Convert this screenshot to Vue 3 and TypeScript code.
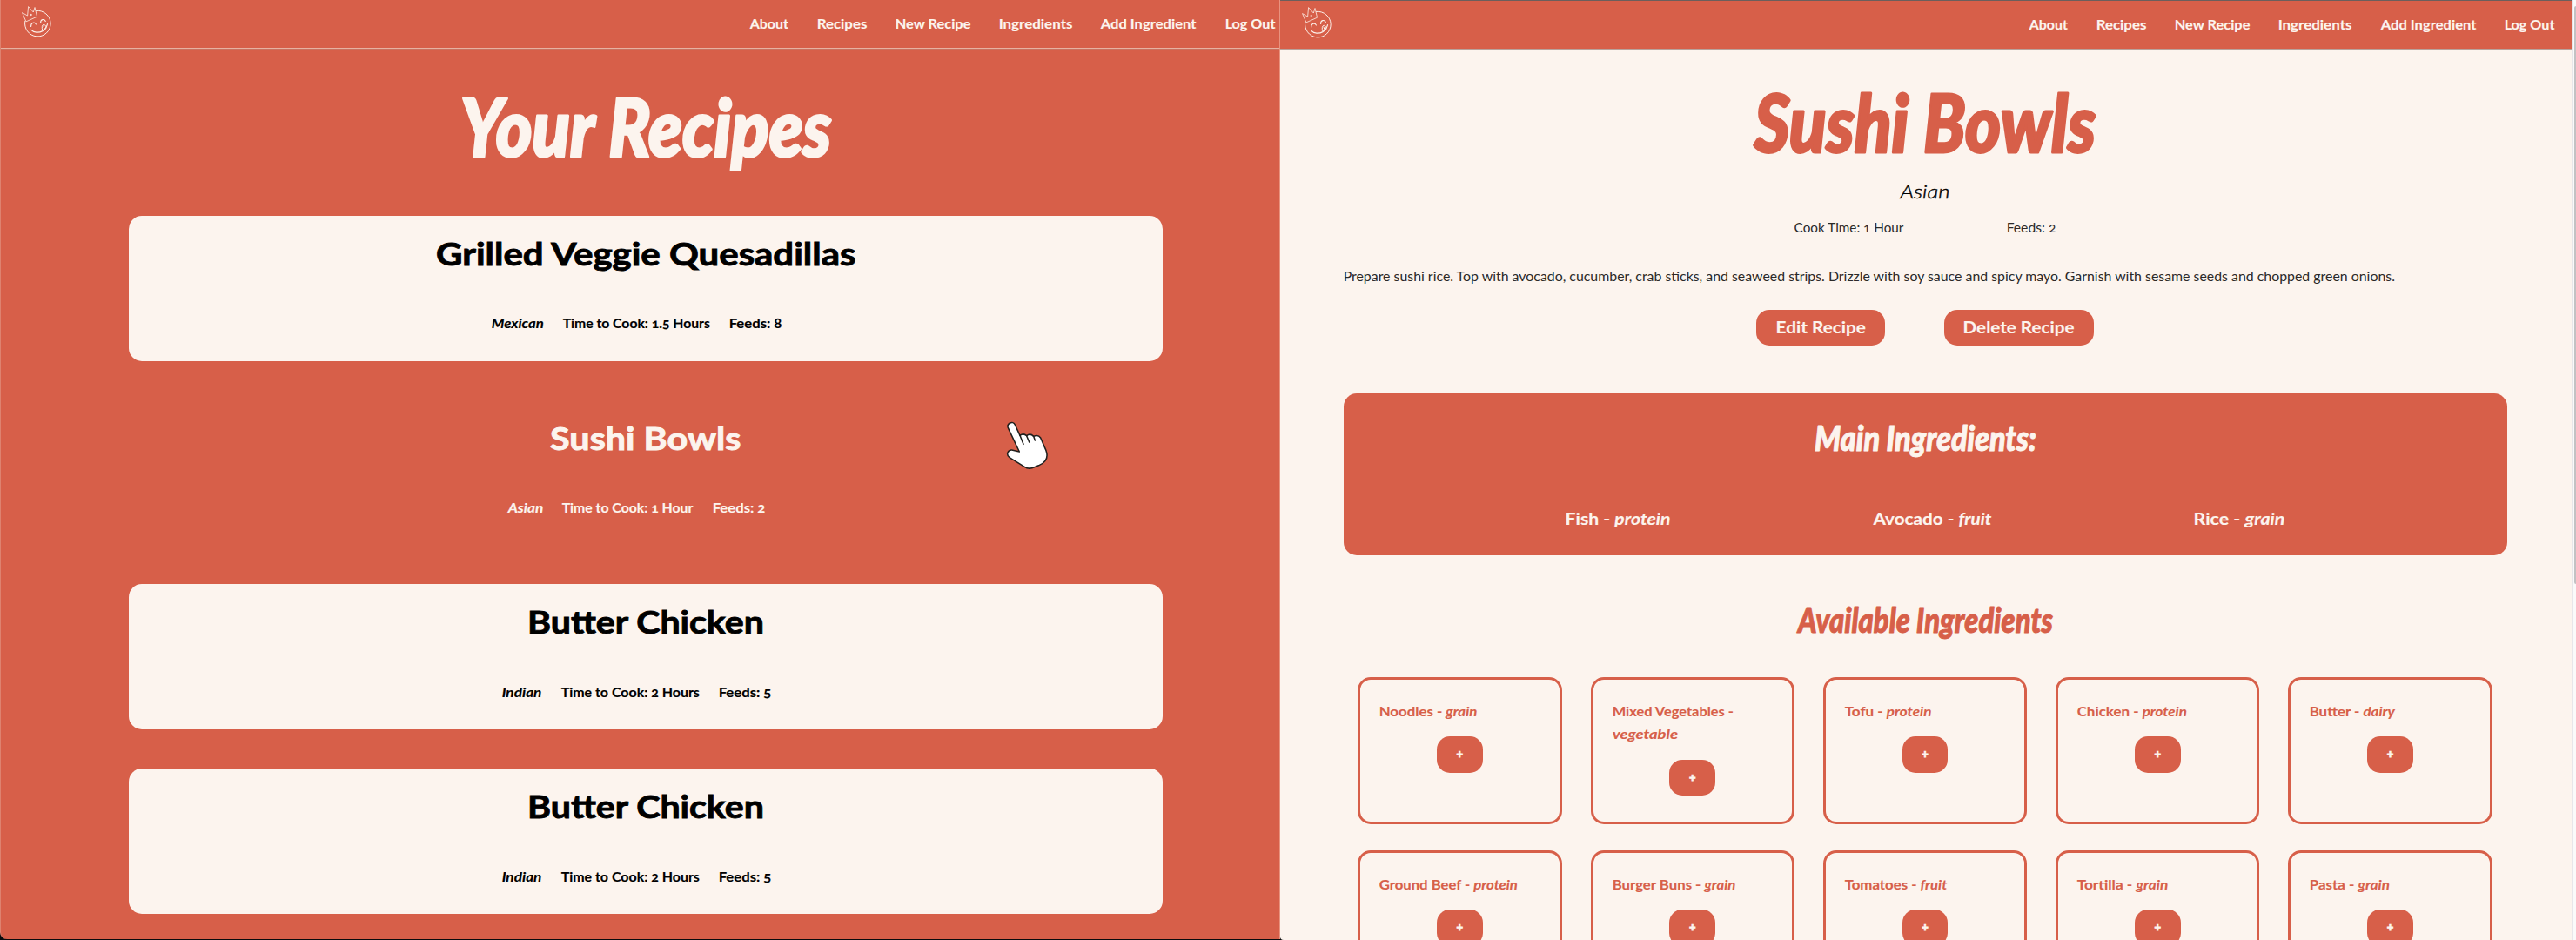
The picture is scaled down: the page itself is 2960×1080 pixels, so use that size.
<script setup lang="ts">
import { h, type FunctionalComponent } from 'vue'

type Part = string | { i: string }

// A single line of text set to a fixed width, with its baseline near 80% of the font size.
const Line: FunctionalComponent<{ parts: Part[]; size: number; w: number }> = (props) => {
  const { parts, size, w } = props
  const bearing = size * 0.025
  return h('svg', { width: w, height: size, 'font-size': size, class: 'line' }, [
    h(
      'text',
      { x: -bearing, y: size * 0.8 + 0.5, textLength: w + bearing * 2, lengthAdjust: 'spacingAndGlyphs', fill: 'currentColor' },
      parts.map((p) => (typeof p === 'string' ? p : h('tspan', { 'font-style': 'italic' }, p.i))),
    ),
  ])
}
Line.props = ['parts', 'size', 'w']

const nav: [string, number][] = [
  ['About', 43.5],
  ['Recipes', 57],
  ['New Recipe', 86],
  ['Ingredients', 84],
  ['Add Ingredient', 109],
  ['Log Out', 57],
]

const recipes = [
  { name: 'Grilled Veggie Quesadillas', w: 480.5, kind: 'Mexican', kw: 59.5, time: 'Time to Cook: 1.5 Hours', tw: 168.5, feeds: 'Feeds: 8', fw: 60, active: false },
  { name: 'Sushi Bowls', w: 217.5, kind: 'Asian', kw: 40, time: 'Time to Cook: 1 Hour', tw: 150, feeds: 'Feeds: 2', fw: 60, active: true },
  { name: 'Butter Chicken', w: 270, kind: 'Indian', kw: 45, time: 'Time to Cook: 2 Hours', tw: 158.5, feeds: 'Feeds: 5', fw: 60, active: false },
  { name: 'Butter Chicken', w: 270, kind: 'Indian', kw: 45, time: 'Time to Cook: 2 Hours', tw: 158.5, feeds: 'Feeds: 5', fw: 60, active: false },
]

const mainIngredients: { parts: Part[]; w: number }[] = [
  { parts: ['Fish - ', { i: 'protein' }], w: 120 },
  { parts: ['Avocado - ', { i: 'fruit' }], w: 135 },
  { parts: ['Rice - ', { i: 'grain' }], w: 104 },
]

const available: { parts: Part[]; w: number }[][] = [
  [{ parts: ['Noodles - ', { i: 'grain' }], w: 112 }],
  [{ parts: ['Mixed Vegetables -'], w: 138.5 }, { parts: [{ i: 'vegetable' }], w: 74.5 }],
  [{ parts: ['Tofu - ', { i: 'protein' }], w: 99 }],
  [{ parts: ['Chicken - ', { i: 'protein' }], w: 125.5 }],
  [{ parts: ['Butter - ', { i: 'dairy' }], w: 97.5 }],
  [{ parts: ['Ground Beef - ', { i: 'protein' }], w: 158.5 }],
  [{ parts: ['Burger Buns - ', { i: 'grain' }], w: 141 }],
  [{ parts: ['Tomatoes - ', { i: 'fruit' }], w: 117 }],
  [{ parts: ['Tortilla - ', { i: 'grain' }], w: 104 }],
  [{ parts: ['Pasta - ', { i: 'grain' }], w: 91.5 }],
]
</script>

<template>
  <div class="app">
    <section class="pane list-pane">
      <header class="bar">
        <svg class="logo" width="36" height="38" viewBox="25 6 36 38">
          <use href="#face" />
          <defs>
            <g id="face" fill="none" stroke="#fcf0e9" stroke-width="1" stroke-linejoin="round" stroke-linecap="round">
              <path d="M41.5 12.4A14.8 14.8 0 1 1 28.8 24.2" />
              <path d="M25.9 14.8L31.6 18L32.6 7.6L38.3 14L40 8.5L42.6 19.2L30.3 24.7Z" stroke-width=".8" />
              <circle cx="35.5" cy="17" r=".6" />
              <path d="M35.6 30.5C35.6 25.8 39.8 25 41.4 27.9M46.6 26.5C46.4 22 50.8 21.3 52.3 24.4" stroke-width="1.1" />
              <path d="M35.8 34.3C39 37.8 44.5 38 49 35.6Q53.2 32.7 54.5 27.6" stroke-width="1.2" />
              <path d="M48.9 35C46.6 29.2 50.2 26.5 52.4 29.7C54 32 52.2 34.6 49.5 35M50.1 30.3L51 33" />
            </g>
          </defs>
        </svg>
        <nav><a v-for="[label, w] in nav" :key="label"><Line :parts="[label]" :size="15.5" :w="w" /></a></nav>
      </header>
      <main class="recipes">
        <h1 class="script"><Line :parts="['Your Recipes']" :size="91" :w="422" /></h1>
        <div class="cards">
          <article v-for="(r, n) in recipes" :key="n" class="card" :class="{ active: r.active }">
            <h2><Line :parts="[r.name]" :size="36.5" :w="r.w" /></h2>
            <div class="meta">
              <Line :parts="[{ i: r.kind }]" :size="15.5" :w="r.kw" />
              <Line :parts="[r.time]" :size="15.5" :w="r.tw" />
              <Line :parts="[r.feeds]" :size="15.5" :w="r.fw" />
            </div>
          </article>
        </div>
      </main>
      <svg class="pointer" width="52" height="60" viewBox="105 69 156 180">
        <path
          d="M115 95C109 80 132 68 139 84L156 121Q168 112 179 122Q191 112 203 124Q219 117 227 129L246 173C255 198 246 213 223 223C199 233 186 239 173 230L120 197C107 188 114 170 128 171L154 177Z"
          fill="#fff" stroke="#1f1f1d" stroke-width="4.6" stroke-linejoin="round"
        />
        <path d="M156 121L168 151M179 122L188 144M203 124L208 138" fill="none" stroke="#1f1f1d" stroke-width="4.6" stroke-linecap="round" />
      </svg>
    </section>

    <section class="pane detail-pane">
      <div class="page">
        <header class="bar">
          <svg class="logo" width="36" height="38" viewBox="25 6 36 38"><use href="#face" /></svg>
          <nav><a v-for="[label, w] in nav" :key="label"><Line :parts="[label]" :size="15.5" :w="w" /></a></nav>
        </header>
        <main class="detail">
          <h1 class="script"><Line :parts="['Sushi Bowls']" :size="92" :w="388" /></h1>
          <div class="cuisine"><Line :parts="[{ i: 'Asian' }]" :size="22.5" :w="56" /></div>
          <div class="facts">
            <Line :parts="['Cook Time: 1 Hour']" :size="15.5" :w="125" />
            <Line :parts="['Feeds: 2']" :size="15.5" :w="56" />
          </div>
          <p class="steps">
            <Line
              :parts="['Prepare sushi rice. Top with avocado, cucumber, crab sticks, and seaweed strips. Drizzle with soy sauce and spicy mayo. Garnish with sesame seeds and chopped green onions.']"
              :size="15.5" :w="1207.5"
            />
          </p>
          <div class="actions">
            <button class="btn edit"><Line :parts="['Edit Recipe']" :size="18.3" :w="102.5" /></button>
            <button class="btn delete"><Line :parts="['Delete Recipe']" :size="18.3" :w="127" /></button>
          </div>
          <section class="main-ingredients">
            <h2 class="script"><Line :parts="['Main Ingredients:']" :size="39" :w="253" /></h2>
            <div class="main-list">
              <Line v-for="(m, n) in mainIngredients" :key="n" :parts="m.parts" :size="18.3" :w="m.w" />
            </div>
          </section>
          <h2 class="script available"><Line :parts="['Available Ingredients']" :size="39" :w="291" /></h2>
          <div class="grid">
            <div v-for="(lines, n) in available" :key="n" class="tile">
              <div class="tile-text"><Line v-for="(l, k) in lines" :key="k" :parts="l.parts" :size="15.5" :w="l.w" /></div>
              <button class="add">+</button>
            </div>
          </div>
        </main>
      </div>
      <div class="scroll"><div class="thumb"></div></div>
    </section>
  </div>
</template>

<style>
body {
  overflow: hidden;
}
</style>

<style scoped>
.app {
  width: 2960px;
  height: 1080px;
  display: flex;
  overflow: hidden;
  background: #0b0b0d;
  font-family: Lato, 'Open Sans', sans-serif;
  font-variant-numeric: oldstyle-nums;
}
h1, h2, p {
  margin: 0;
  font-size: inherit;
  font-weight: inherit;
}
button {
  border: 0;
  padding: 0;
  font-family: inherit;
  background: #d75f49;
  color: #fcf4ee;
}
.app :deep(svg.line) {
  display: block;
  overflow: visible;
  flex: none;
}
/* Bold copy is set slightly heavier than the face's own bold. */
.bar :deep(text),
.meta :deep(text),
.btn :deep(text),
.main-list :deep(text),
.tile :deep(text) {
  stroke: currentColor;
  stroke-width: 0.15px;
}
.card h2 :deep(text) {
  stroke: currentColor;
  stroke-width: 0.9px;
}
.script {
  font-family: Lato, cursive;
  font-weight: 900;
  font-style: italic;
}
.script :deep(text) {
  stroke: currentColor;
  stroke-width: 1px;
  stroke-linejoin: round;
}
h1.script :deep(text) {
  stroke-width: 3px;
}
.pane {
  box-sizing: border-box;
  overflow: hidden;
}
.list-pane {
  position: relative;
  width: 1471px;
  height: 1079px;
  background: #d75f49;
  border-left: 1px solid #de826f;
  border-right: 1px solid #e9937f;
  border-bottom-left-radius: 8px;
}
.bar {
  box-sizing: border-box;
  height: 57px;
  display: flex;
  justify-content: space-between;
  align-items: flex-start;
  background: #d75f49;
  color: #fcf4ee;
  font-weight: 700;
}
.list-pane .bar {
  border-bottom: 1px solid #c9705e;
  box-shadow: inset 0 -1px 0 #e7b1a1;
  padding: 0 5.5px 0 24px;
}
.logo {
  margin-top: 6px;
}
nav {
  display: flex;
  gap: 33.2px;
  padding-top: 20px;
}
.recipes {
  margin-left: 147px;
  width: 1188px;
  padding-top: 50.2px;
  display: flex;
  flex-direction: column;
  align-items: center;
  color: #fcf4ee;
}
.cards {
  margin-top: 49.8px;
  width: 100%;
  display: flex;
  flex-direction: column;
  gap: 45px;
}
.card {
  box-sizing: border-box;
  height: 166.7px;
  padding-top: 27px;
  display: flex;
  flex-direction: column;
  align-items: center;
  border-radius: 15px;
  background: #fcf4ee;
  color: #000;
  font-weight: 700;
}
.card.active {
  background: transparent;
  color: #fcf4ee;
}
.meta {
  display: flex;
  margin-top: 53px;
  gap: 22.5px;
  padding-right: 21.5px;
}
.pointer {
  position: absolute;
  left: 1154px;
  top: 483px;
}
.detail-pane {
  width: 1489px;
  height: 1080px;
  display: flex;
  background: #fcf4ee;
  border-bottom-left-radius: 4px;
}
.page {
  width: 1484px;
  flex: none;
}
.detail-pane .bar {
  border-top: 1px solid #6b5e5c;
  border-bottom: 1px solid #b9a29b;
  padding: 0 20.2px 0 25px;
}
.detail {
  margin-left: 72.5px;
  width: 1337px;
  padding-top: 44.4px;
  display: flex;
  flex-direction: column;
  align-items: center;
  color: #2b2928;
}
.detail > .script {
  color: #d75f49;
}
.cuisine {
  margin-top: 15.8px;
  margin-bottom: 0.5px;
  font-weight: 300;
  color: #000;
}
.cuisine :deep(text) {
  stroke: currentColor;
  stroke-width: 0.4px;
}
.facts {
  margin-top: 21.6px;
  margin-bottom: 0.5px;
  display: flex;
  gap: 119.5px;
}
.steps {
  margin-top: 40.5px;
  align-self: flex-start;
}
.actions {
  margin-top: 30.2px;
  display: flex;
  gap: 67.5px;
}
.btn {
  height: 41px;
  padding: 12.2px 0 0;
  display: flex;
  align-items: flex-start;
  justify-content: center;
  border-radius: 15px;
  font-weight: 700;
}
.edit {
  width: 148px;
}
.delete {
  width: 172.5px;
}
.main-ingredients {
  box-sizing: border-box;
  margin-top: 55px;
  width: 100%;
  height: 185.6px;
  padding-top: 34.5px;
  display: flex;
  flex-direction: column;
  align-items: center;
  border-radius: 15px;
  background: #d75f49;
  color: #fcf4ee;
}
.main-list {
  margin-top: 62.6px;
  display: flex;
  gap: 233.3px;
  font-weight: 700;
}
.available {
  margin-top: 57.2px;
}
.grid {
  margin-top: 44.2px;
  display: grid;
  grid-template-columns: repeat(5, 234.3px);
  grid-auto-rows: 168.7px;
  gap: 30.3px 33px;
}
.tile {
  box-sizing: border-box;
  padding: 29.2px 22px 0;
  border: 3px solid #d75f49;
  border-radius: 15px;
  color: #d75f49;
  font-weight: 700;
}
.tile-text {
  display: flex;
  flex-direction: column;
  gap: 10.8px;
}
.add {
  display: flex;
  align-items: center;
  justify-content: center;
  width: 52.7px;
  height: 41.5px;
  margin: 20.6px auto 0;
  border-radius: 15px;
  font-size: 13px;
  font-weight: 900;
  line-height: 1;
  -webkit-text-stroke: 0.8px currentColor;
}
.scroll {
  box-sizing: border-box;
  flex: 1;
  border-left: 1px solid #e8e6ea;
  background: #fafafa;
  display: flex;
  justify-content: flex-end;
}
.thumb {
  width: 2px;
  height: 664px;
  margin-top: 7px;
  background: #c2c2c4;
  border-radius: 2px 0 0 2px;
}
</style>
